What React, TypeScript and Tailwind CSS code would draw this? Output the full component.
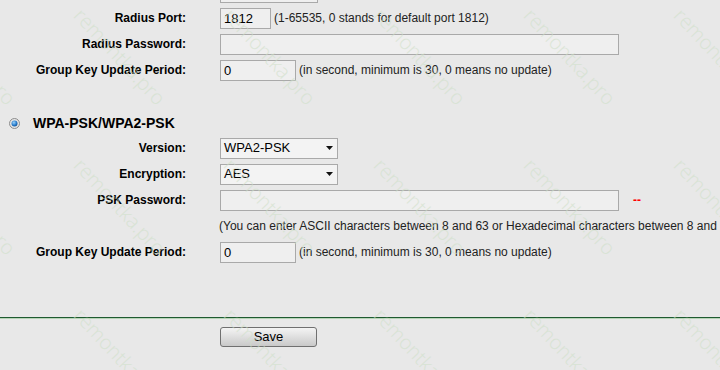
import React from 'react';

const font = "font-['Liberation_Sans',Arial,sans-serif]";

const Label: React.FC<{ children?: React.ReactNode }> = ({ children }) => (
  <div className="w-[186px] shrink-0 text-right text-[12px] font-bold text-black">{children}</div>
);

const TextBox: React.FC<{ value?: string; width: string }> = ({ value = '', width }) => (
  <input
    readOnly
    defaultValue={value}
    className={`${width} h-[21px] shrink-0 border border-[#a9a9a9] bg-[#efefef] px-[3px] text-[13px] text-black outline-none ${font}`}
  />
);

const Select: React.FC<{ value: string }> = ({ value }) => (
  <div className="flex h-[21px] w-[118px] shrink-0 items-center justify-between border border-[#a9a9a9] bg-[#f3f3f3] pl-[3px] pr-[4px] text-[13px] text-black">
    <span>{value}</span>
    <svg width="7" height="4" viewBox="0 0 7 4">
      <path d="M0 0 L7 0 L3.5 4 Z" fill="#111" />
    </svg>
  </div>
);

const Note: React.FC<{ children?: React.ReactNode }> = ({ children }) => (
  <span className="ml-[3px] whitespace-nowrap text-[12px] text-[#222]">{children}</span>
);

const Row: React.FC<{ label?: string; children?: React.ReactNode }> = ({ label, children }) => (
  <div className="flex h-[26px] items-center">
    <Label>{label}</Label>
    <div className="ml-[34px] flex items-center">{children}</div>
  </div>
);

// watermark grid, same pitch both ways
const marks: { x: number; y: number }[] = [];
for (const y of [-145, 5, 155, 305]) {
  for (const x of [-65, 85, 235, 385, 535, 685]) {
    marks.push({ x, y });
  }
}

export default function App() {
  return (
    <div className={`relative h-[370px] w-[720px] overflow-hidden bg-[#e8e8e8] ${font}`}>
      <div className="mt-[-21px]">
        <Row>
          <TextBox width="w-[98px]" />
        </Row>
        <Row label="Radius Port:">
          <TextBox width="w-[51px]" value="1812" />
          <Note>(1-65535, 0 stands for default port 1812)</Note>
        </Row>
        <Row label="Radius Password:">
          <TextBox width="w-[399px]" />
        </Row>
        <Row label="Group Key Update Period:">
          <TextBox width="w-[76px]" value="0" />
          <Note>(in second, minimum is 30, 0 means no update)</Note>
        </Row>

        <div className="mt-[28px] flex h-[24px] items-center pl-[9px]">
          <svg width="11" height="11" viewBox="0 0 11 11">
            <defs>
              <radialGradient id="dot" cx="0.4" cy="0.35" r="0.7">
                <stop offset="0" stopColor="#9fd3f7" />
                <stop offset="0.6" stopColor="#2a7fd0" />
                <stop offset="1" stopColor="#15508f" />
              </radialGradient>
            </defs>
            <circle cx="5.5" cy="5.5" r="5" fill="#e4e4e4" stroke="#8c8c8c" strokeWidth="1" />
            <circle cx="5.5" cy="5.5" r="3" fill="url(#dot)" />
          </svg>
          <span className="ml-[13px] text-[14px] font-bold text-black">WPA-PSK/WPA2-PSK</span>
        </div>

        <Row label="Version:">
          <Select value="WPA2-PSK" />
        </Row>
        <Row label="Encryption:">
          <Select value="AES" />
        </Row>
        <Row label="PSK Password:">
          <TextBox width="w-[399px]" />
          <span className="ml-[14px] text-[12px] font-bold text-[#ff0000]">--</span>
        </Row>
        <Row>
          <span className="ml-[-1px] whitespace-nowrap text-[12px] text-[#222]">
            (You can enter ASCII characters between 8 and 63 or Hexadecimal characters between 8 and 64.)
          </span>
        </Row>
        <Row label="Group Key Update Period:">
          <TextBox width="w-[76px]" value="0" />
          <Note>(in second, minimum is 30, 0 means no update)</Note>
        </Row>

        <div className="mt-[52px] h-px bg-[#1f5a30]" />
        <div className="h-px bg-[#b6d4b6]" />

        <div className="mt-[5px] pl-[220px]">
          <button className="h-[20px] w-[97px] rounded-[3px] border border-[#707070] bg-gradient-to-b from-[#f4f4f4] to-[#c9c9c9] text-[13px] leading-[18px] text-black">
            Save
          </button>
        </div>
      </div>

      {/* remontka.pro watermark over everything */}
      <div className="pointer-events-none absolute inset-0">
        {marks.map((m, i) => (
          <span
            key={i}
            className="absolute origin-top-left rotate-[47deg] whitespace-nowrap font-['Open_Sans',sans-serif] text-[20px] font-light leading-none text-[#cfe0c8] opacity-60"
            style={{ left: m.x, top: m.y }}
          >
            remontka.pro
          </span>
        ))}
      </div>
    </div>
  );
}
